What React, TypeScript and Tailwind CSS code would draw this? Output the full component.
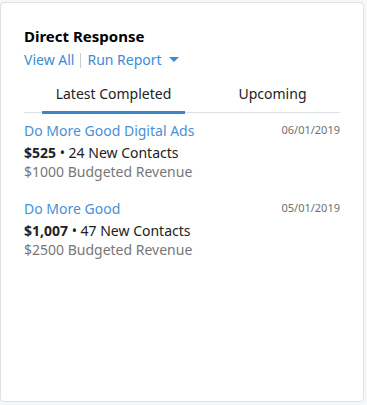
import React from "react";

const font = { fontFamily: '"Segoe UI", "Noto Sans", "Open Sans", sans-serif' };

function Item({ title, date, amount, contacts, budget }: { title: string; date: string; amount: string; contacts: string; budget: string }) {
  return (
    <div className="flex flex-col">
      <div className="flex items-start justify-between">
        <span className="text-[14px] leading-[20px] text-[#4a8fd8]">{title}</span>
        <span className="text-[11px] leading-[18px] text-[#707070]">{date}</span>
      </div>
      <div className="text-[14px] leading-[20px] text-[#222] mt-[2px]">
        <span className="font-bold">{amount}</span> • {contacts}
      </div>
      <div className="text-[14px] leading-[18px] text-[#777]">{budget}</div>
    </div>
  );
}

export default function App() {
  return (
    <div className="w-[367px] h-[405px] bg-[#f6f7f9] pt-[2px]" style={font}>
      <div className="w-[364px] h-[400px] bg-white border border-[#dfe1e5] rounded-[4px] px-[23px] pt-[22px]">
        <div className="text-[15px] font-bold leading-[22px] text-black">Direct Response</div>
        <div className="flex items-center text-[14px] leading-[20px] text-[#3d8ad6] mt-[3px]">
          <span>View All</span>
          <span className="w-px h-[15px] bg-[#c8cdd3] mx-[6px]" />
          <span>Run Report</span>
          <svg width="10" height="6" viewBox="0 0 10 6" className="ml-[7px]">
            <path d="M0 0 L10 0 L5 5 Z" fill="#3d8ad6" />
          </svg>
        </div>
        <div className="flex mt-[13px] border-b border-[#dcdfe3] text-[14px] text-[#222]">
          <div className="w-[161px] flex justify-center">
            <div className="w-[143px] ml-[18px] text-center pb-[7px] pt-[1px] border-b-[3px] border-[#3a86c8] mb-[-2px] leading-[20px]">Latest Completed</div>
          </div>
          <div className="flex-1 flex justify-center pl-[20px] pt-[1px] pb-[8px] leading-[20px]">Upcoming</div>
        </div>
        <div className="flex flex-col gap-[18px] mt-[8px]">
          <Item title="Do More Good Digital Ads" date="06/01/2019" amount="$525" contacts="24 New Contacts" budget="$1000 Budgeted Revenue" />
          <Item title="Do More Good" date="05/01/2019" amount="$1,007" contacts="47 New Contacts" budget="$2500 Budgeted Revenue" />
        </div>
      </div>
    </div>
  );
}
